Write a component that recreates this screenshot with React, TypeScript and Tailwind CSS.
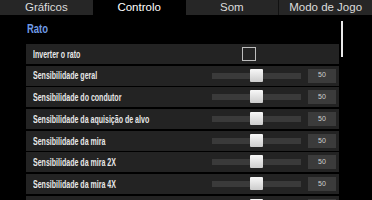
import React from 'react';

const tabs = ['Gráficos', 'Controlo', 'Som', 'Modo de Jogo'];

const rows: { label: string; kind: 'check' | 'slider'; value?: number }[] = [
    { label: 'Inverter o rato', kind: 'check' },
    { label: 'Sensibilidade geral', kind: 'slider', value: 50 },
    { label: 'Sensibilidade do condutor', kind: 'slider', value: 50 },
    { label: 'Sensibilidade da aquisição de alvo', kind: 'slider', value: 50 },
    { label: 'Sensibilidade da mira', kind: 'slider', value: 50 },
    { label: 'Sensibilidade da mira 2X', kind: 'slider', value: 50 },
    { label: 'Sensibilidade da mira 4X', kind: 'slider', value: 50 },
    { label: 'Sensibilidade da mira 8X', kind: 'slider', value: 50 },
];

const Slider = ({ value }: { value: number }) => (
    <div className="flex items-center">
        <div className="relative h-[6px] w-[89px] bg-[#3a3a3a]">
            <div
                className="absolute top-[-4px] h-[13px] w-[13px] rounded-[1px] bg-gradient-to-b from-[#f8f8f8] to-[#cccccc]"
                style={{ left: `${(value / 100) * 76}px` }}
            />
        </div>
        <div className="ml-[7px] mr-[3px] flex h-[14px] w-[28px] items-center justify-center bg-[#3b3b3b] text-[7px] text-[#cfcfcf]">
            {value}
        </div>
    </div>
);

export default function App() {
    return (
        <div className="h-[200px] w-[372px] overflow-hidden bg-black font-['Liberation_Sans',Arial,sans-serif]">
            <div className="flex h-[15px]">
                {tabs.map((t, i) => (
                    <div
                        key={t}
                        className={`flex flex-1 items-center justify-center pt-[1px] text-[11.5px] leading-none ${
                            i === 1 ? 'bg-black text-white' : 'bg-[#262626] text-[#dcdcdc]'
                        } ${i === 3 ? 'border-l border-[#111]' : ''}`}
                    >
                        {t}
                    </div>
                ))}
            </div>
            <div className="flex pl-[26px]">
                <div className="w-[313px]">
                    <div className="flex h-[29px] items-center pl-[1px]">
                        <span className="origin-left scale-x-[0.7] whitespace-nowrap text-[13.5px] font-bold text-[#6f9be6]">
                            Rato
                        </span>
                    </div>
                    <div className="flex flex-col gap-[1.7px]">
                        {rows.map((r) => (
                            <div key={r.label} className="flex h-[20px] items-center bg-[#232323]">
                                <div className="min-w-0 flex-1 pl-[7px]">
                                    <div className="origin-left scale-x-[0.64] whitespace-nowrap text-[11px] font-bold text-[#e8e8e8]">
                                        {r.label}
                                    </div>
                                </div>
                                {r.kind === 'check' ? (
                                    <div className="mr-[83px] h-[14px] w-[14px] border border-[#bdbdbd]" />
                                ) : (
                                    <Slider value={r.value ?? 0} />
                                )}
                            </div>
                        ))}
                    </div>
                </div>
                <div className="ml-[2px] mt-[6px] h-[36px] w-[2px] bg-[#e8e8e8]" />
            </div>
        </div>
    );
}
